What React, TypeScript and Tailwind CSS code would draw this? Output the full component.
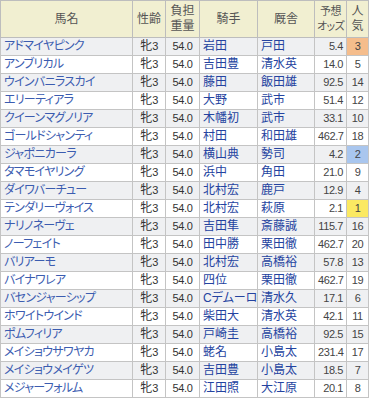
import React from 'react';

type Row = {
  name: string;
  jockey: string;
  trainer: string;
  odds: string;
  pop: number;
};

const rows: Row[] = [
  { name: 'アドマイヤピンク', jockey: '岩田', trainer: '戸田', odds: '5.4', pop: 3 },
  { name: 'アンブリカル', jockey: '吉田豊', trainer: '清水英', odds: '14.0', pop: 5 },
  { name: 'ウインバニラスカイ', jockey: '藤田', trainer: '飯田雄', odds: '92.5', pop: 14 },
  { name: 'エリーティアラ', jockey: '大野', trainer: '武市', odds: '51.4', pop: 12 },
  { name: 'クイーンマグノリア', jockey: '木幡初', trainer: '武市', odds: '33.1', pop: 10 },
  { name: 'ゴールドシャンティ', jockey: '村田', trainer: '和田雄', odds: '462.7', pop: 18 },
  { name: 'ジャポニカーラ', jockey: '横山典', trainer: '勢司', odds: '4.2', pop: 2 },
  { name: 'タマモイヤリング', jockey: '浜中', trainer: '角田', odds: '21.0', pop: 9 },
  { name: 'ダイワバーチュー', jockey: '北村宏', trainer: '鹿戸', odds: '12.9', pop: 4 },
  { name: 'テンダリーヴォイス', jockey: '北村宏', trainer: '萩原', odds: '2.1', pop: 1 },
  { name: 'ナリノネーヴェ', jockey: '吉田隼', trainer: '斎藤誠', odds: '115.7', pop: 16 },
  { name: 'ノーフェイト', jockey: '田中勝', trainer: '栗田徹', odds: '462.7', pop: 20 },
  { name: 'バリアーモ', jockey: '北村宏', trainer: '高橋裕', odds: '57.8', pop: 13 },
  { name: 'バイナワレア', jockey: '四位', trainer: '栗田徹', odds: '462.7', pop: 19 },
  { name: 'バセンジャーシップ', jockey: 'Cデムーロ', trainer: '清水久', odds: '17.1', pop: 6 },
  { name: 'ホワイトウインド', jockey: '柴田大', trainer: '清水英', odds: '42.1', pop: 11 },
  { name: 'ポムフィリア', jockey: '戸崎圭', trainer: '高橋裕', odds: '92.5', pop: 15 },
  { name: 'メイショウサワヤカ', jockey: '蛯名', trainer: '小島太', odds: '231.4', pop: 17 },
  { name: 'メイショウメイゲツ', jockey: '吉田豊', trainer: '小島太', odds: '18.5', pop: 7 },
  { name: 'メジャーフォルム', jockey: '江田照', trainer: '大江原', odds: '20.1', pop: 8 },
];

const popBg: Record<number, string> = {
  1: 'bg-[#fbe962]',
  2: 'bg-[#a9c6ee]',
  3: 'bg-[#f5bd8c]',
};

function Head({ children, className = '' }: { children: React.ReactNode; className?: string }) {
  return (
    <th className="border border-[#bdbdbd] p-0 font-normal text-[#555]">
      <div className={`h-[36px] flex flex-col items-center justify-center leading-[15px] whitespace-nowrap ${className}`}>
        {children}
      </div>
    </th>
  );
}

function Cell({ children, className = '' }: { children: React.ReactNode; className?: string }) {
  return (
    <td className="border border-[#c4c4c4] p-0">
      <div className={`h-[17px] leading-[17px] px-[3px] whitespace-nowrap overflow-hidden ${className}`}>
        {children}
      </div>
    </td>
  );
}

export default function App() {
  const num = "text-[11px] tracking-[-0.4px] font-['Liberation_Sans',sans-serif]";

  return (
    <div className="w-[369px] h-[400px] bg-white overflow-hidden font-['Liberation_Sans','Noto_Sans_CJK_JP',sans-serif] [font-feature-settings:'palt'] text-[12px]">
      <table className="table-fixed border-collapse w-[368px]">
        <colgroup>
          <col className="w-[132px]" />
          <col className="w-[33px]" />
          <col className="w-[34px]" />
          <col className="w-[58px]" />
          <col className="w-[57px]" />
          <col className="w-[32px]" />
          <col className="w-[22px]" />
        </colgroup>
        <thead>
          <tr className="bg-[#f1efd1]">
            <Head>馬名</Head>
            <Head>性齢</Head>
            <Head><span>負担</span><span>重量</span></Head>
            <Head>騎手</Head>
            <Head>厩舎</Head>
            <Head className="text-[11px] tracking-[-0.6px]"><span>予想</span><span>オッズ</span></Head>
            <Head><span>人</span><span>気</span></Head>
          </tr>
        </thead>
        <tbody>
          {rows.map((r, i) => (
            <tr key={r.name} className={i % 2 === 0 ? 'bg-[#eff0f2]' : 'bg-white'}>
              <Cell className="text-[#3b5cb0] tracking-[-0.7px]">{r.name}</Cell>
              <Cell className="text-center text-[#333]">
                牝<span className={num}>3</span>
              </Cell>
              <Cell className={`text-center text-[#333] ${num}`}>54.0</Cell>
              <Cell className="text-[#2443a0]">{r.jockey}</Cell>
              <Cell className="text-[#2443a0]">{r.trainer}</Cell>
              <Cell className={`text-right text-[#444] ${num}`}>{r.odds}</Cell>
              <td className={`border border-[#c4c4c4] p-0 ${popBg[r.pop] ?? ''}`}>
                <div className={`h-[17px] leading-[17px] text-center text-[#444] ${num}`}>{r.pop}</div>
              </td>
            </tr>
          ))}
        </tbody>
      </table>
    </div>
  );
}
